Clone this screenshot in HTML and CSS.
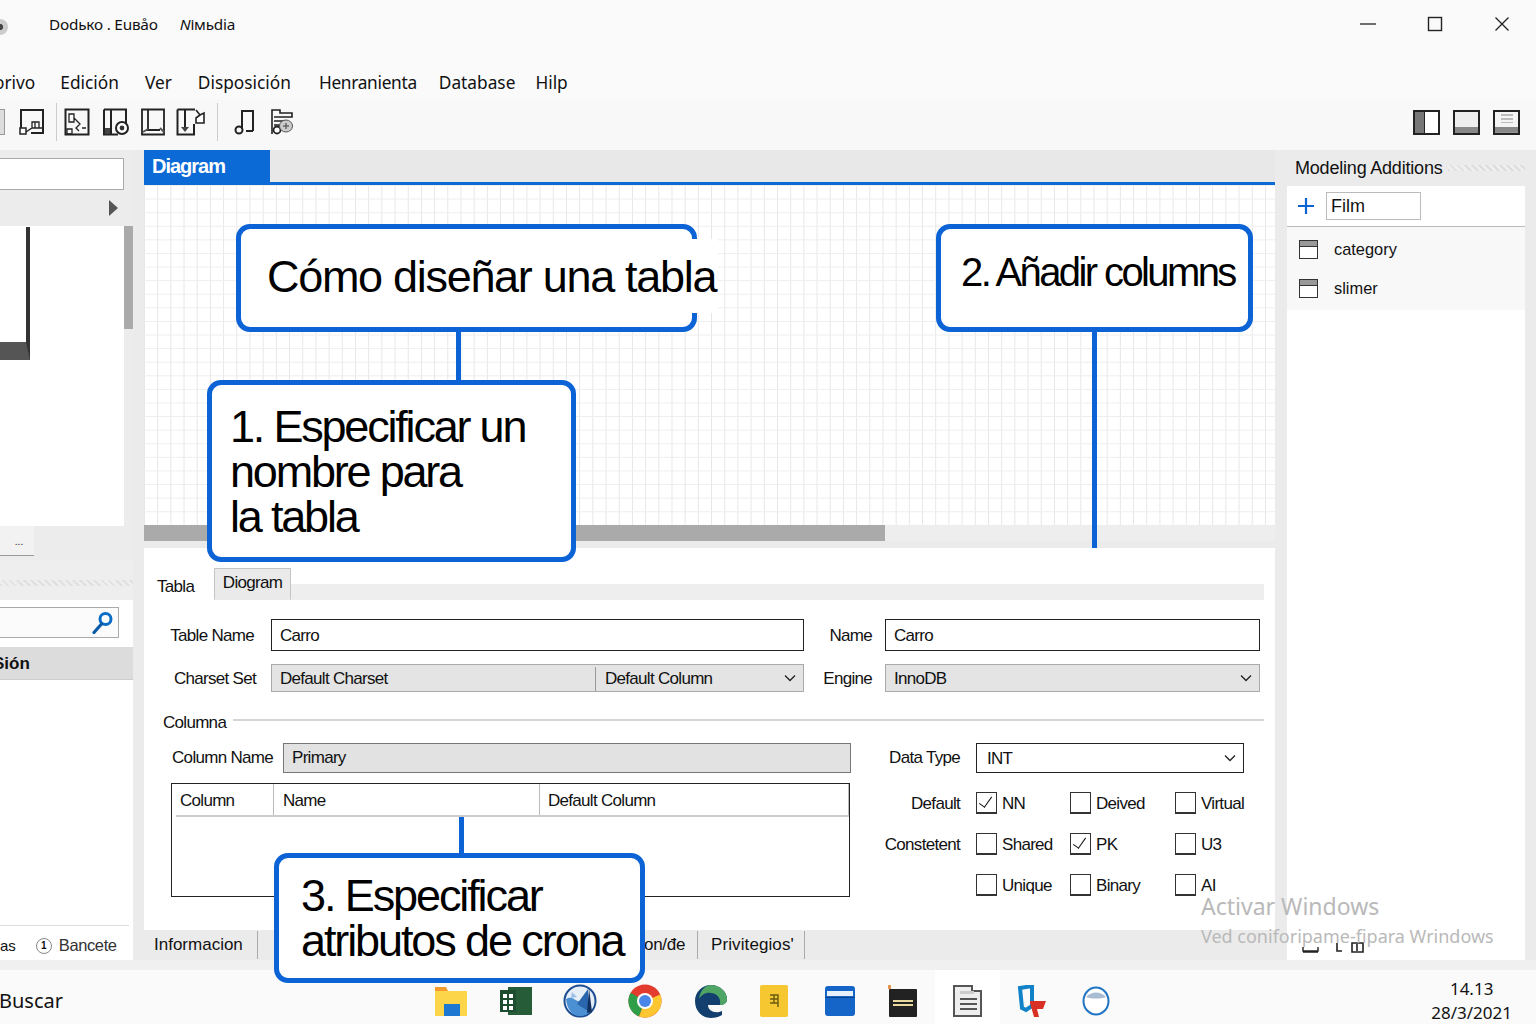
FILE: index.html
```html
<!DOCTYPE html>
<html lang="es">
<head>
    <meta charset="UTF-8">
    <title>Cómo diseñar una tabla</title>
    <link rel="stylesheet" href="styles.css">
</head>
<body>
<div class="app">
    <div class="titlebar">
        <span class="app-dot"></span>
        <span class="title-text">Dodько . Euвåo</span>
        <span class="title-text title-second"><i>N</i>імьdia</span>
        <div class="win-controls">
            <svg width="16" height="16" viewBox="0 0 16 16"><path d="M0 8h16" stroke="#222" stroke-width="1.3"/></svg>
            <svg width="16" height="16" viewBox="0 0 16 16"><rect x="1.5" y="1.5" width="13" height="13" fill="none" stroke="#222" stroke-width="1.4"/></svg>
            <svg width="16" height="16" viewBox="0 0 16 16"><path d="M1.5 1.5l13 13M14.5 1.5l-13 13" stroke="#222" stroke-width="1.3"/></svg>
        </div>
    </div>

    <div class="menubar">
        <span class="menu-first">orivo</span>
        <span class="m-edit">Edición</span>
        <span class="m-ver">Ver</span>
        <span class="m-disp">Disposición</span>
        <span class="m-herr">Henranienta</span>
        <span class="m-db">Database</span>
        <span class="m-help">Hilp</span>
    </div>

    <div class="toolbar">
        <div class="tool-group">
            <span class="tool-stub"></span>
            <svg class="tool tool-a" width="26" height="28" viewBox="0 0 26 28"><path d="M2 23V2h22v23H12" fill="none" stroke="#222" stroke-width="2"/><rect x="1" y="20" width="6" height="6" fill="#fff" stroke="#222" stroke-width="1.5"/><path d="M13 20v-6h7v6M16 14v6M7 24l6-4h11" fill="none" stroke="#222" stroke-width="1.3"/></svg>
            <span class="tool-sep tool-sep-a"></span>
            <svg class="tool tool-b" width="26" height="28" viewBox="0 0 26 28"><path d="M1.5 1.5h23v25h-23z" fill="none" stroke="#222" stroke-width="2"/><path d="M5 6h5v8H5zM10 10l6 6-4 4 3 3M3 21h5v5H3zM18 20h4" fill="none" stroke="#222" stroke-width="1.3"/></svg>
            <svg class="tool tool-c" width="28" height="28" viewBox="0 0 28 28"><path d="M2 1.5h22v20M2 1.5v25h14M9 2v24" fill="none" stroke="#222" stroke-width="2"/><rect x="3" y="20" width="5" height="6" fill="#444"/><circle cx="20" cy="20" r="6" fill="#fff" stroke="#222" stroke-width="2"/><circle cx="20" cy="20" r="2.4" fill="#333"/></svg>
            <svg class="tool tool-d" width="26" height="28" viewBox="0 0 26 28"><path d="M2 1.5h22v25H2zM8 2v20M6 22h14" fill="none" stroke="#222" stroke-width="1.8"/><path d="M3 24l5-3M20 20l4 4" stroke="#555" stroke-width="2"/></svg>
            <svg class="tool tool-e" width="30" height="28" viewBox="0 0 30 28"><path d="M1.5 1.5H19M1.5 1.5v25H18V16M9 2v18" fill="none" stroke="#222" stroke-width="2"/><path d="M5 19h8l-4 5z" fill="#444"/><path d="M20 2l4 5 4-2v10h-8v-5l4-3" fill="#fff" stroke="#222" stroke-width="1.6"/></svg>
        </div>
        <span class="tool-sep"></span>
        <div class="tool-group tool-group-b">
            <svg width="24" height="28" viewBox="0 0 24 28"><path d="M9 21V3h11v20" fill="none" stroke="#222" stroke-width="2"/><circle cx="6" cy="22" r="3.5" fill="none" stroke="#222" stroke-width="2"/><path d="M13 23h7" stroke="#222" stroke-width="2"/></svg>
            <svg width="24" height="28" viewBox="0 0 24 28"><path d="M2 26V2h8v3h12v4H4M4 13h12M4 17h6" fill="none" stroke="#222" stroke-width="1.6"/><circle cx="7" cy="22" r="3.5" fill="#fff" stroke="#222" stroke-width="1.8"/><ellipse cx="16" cy="18" rx="6.5" ry="6" fill="#ccc" stroke="#555"/><path d="M16 15v6M13 18h6" stroke="#666" stroke-width="1.5"/></svg>
        </div>
        <div class="layout-btns">
            <span class="lay lay-left"></span>
            <span class="lay lay-bottom"></span>
            <span class="lay lay-dots"></span>
        </div>
    </div>

    <div class="main">
        <aside class="left">
            <div class="left-input"></div>
            <div class="left-arrow"><span class="tri"></span></div>
            <div class="tree">
                <span class="tree-shape"></span>
                <span class="tree-scroll"></span>
            </div>
            <div class="left-tabs"><span class="left-tab">...</span></div>
            <div class="left-strip"></div>
            <div class="left-lower">
                <div class="search">
                    <svg width="22" height="24" viewBox="0 0 22 24"><circle cx="13.5" cy="8" r="5.5" fill="#fff" stroke="#0a6cc4" stroke-width="3"/><path d="M9.5 13L2 21.5" stroke="#0a5aa8" stroke-width="3.2" stroke-linecap="round"/></svg>
                </div>
                <div class="sesion"><span>Sión</span></div>
                <div class="left-foot">
                    <span class="foot-as">as</span>
                    <span class="foot-num">1</span>
                    <span class="foot-label">Bancete</span>
                </div>
            </div>
        </aside>

        <section class="center">
            <div class="tabstrip"><span class="tab-active">Diagram</span></div>
            <div class="canvas"></div>
            <div class="hscroll"><span class="hthumb"></span></div>

            <div class="form">
                <div class="form-tabs">
                    <span class="ftab-plain">Tabla</span>
                    <span class="ftab">Diogram</span>
                    <span class="ftab-rest"></span>
                </div>

                <div class="grid-row row-name">
                    <label>Table Name</label>
                    <div class="input">Carro</div>
                    <label>Name</label>
                    <div class="input">Carro</div>
                </div>
                <div class="grid-row row-charset">
                    <label>Charset Set</label>
                    <div class="select two-part">
                        <span class="part-a">Default Charset</span>
                        <span class="part-b">Default Column</span>
                        <svg class="chev" width="12" height="8" viewBox="0 0 12 8"><path d="M1 1.5l5 5 5-5" fill="none" stroke="#222" stroke-width="1.3"/></svg>
                    </div>
                    <label>Engine</label>
                    <div class="select">
                        <span>InnoDB</span>
                        <svg class="chev" width="12" height="8" viewBox="0 0 12 8"><path d="M1 1.5l5 5 5-5" fill="none" stroke="#222" stroke-width="1.3"/></svg>
                    </div>
                </div>

                <div class="group-title"><span>Columna</span><i></i></div>

                <div class="col-area">
                    <div class="col-left">
                        <div class="col-name">
                            <label>Column Name</label>
                            <div class="input input-grey">Primary</div>
                        </div>
                        <div class="col-table">
                            <div class="col-head">
                                <span class="ch1">Column</span>
                                <span class="ch2">Name</span>
                                <span class="ch3">Default Column</span>
                            </div>
                        </div>
                    </div>
                    <div class="col-right">
                        <div class="dtype">
                            <label>Data Type</label>
                            <div class="input dtype-box">
                                <span>INT</span>
                                <svg class="chev" width="12" height="8" viewBox="0 0 12 8"><path d="M1 1.5l5 5 5-5" fill="none" stroke="#222" stroke-width="1.3"/></svg>
                            </div>
                        </div>
                        <div class="checks">
                            <label>Default</label>
                            <span class="chk on">NN</span>
                            <span class="chk">Deived</span>
                            <span class="chk">Virtual</span>
                            <label>Constetent</label>
                            <span class="chk">Shared</span>
                            <span class="chk on">PK</span>
                            <span class="chk">U3</span>
                            <label></label>
                            <span class="chk">Unique</span>
                            <span class="chk">Binary</span>
                            <span class="chk">AI</span>
                        </div>
                    </div>
                </div>
            </div>

            <div class="bottom-tabs">
                <span class="bt bt-info">Informacion</span>
                <span class="bt bt-cons">on/đe</span>
                <span class="bt bt-priv">Privitegios'</span>
            </div>
        </section>

        <aside class="right">
            <div class="right-head"><span>Modeling Additions</span><i></i></div>
            <div class="right-body">
                <div class="add-row">
                    <svg width="16" height="16" viewBox="0 0 16 16"><path d="M8 0v16M0 8h16" stroke="#0b63d6" stroke-width="2.2"/></svg>
                    <div class="film">Film</div>
                </div>
                <div class="list">
                    <div class="list-row"><span class="tbl-icon"></span>category</div>
                    <div class="list-row"><span class="tbl-icon"></span>slimer</div>
                </div>
                <div class="right-foot">
                    <svg width="64" height="14" viewBox="0 0 64 14"><path d="M1 8v4h15V8M1 13h15" fill="none" stroke="#222" stroke-width="1.4"/><path d="M35 4v8h5M50 4h11v9H50zM55 5v7" fill="none" stroke="#222" stroke-width="1.6"/></svg>
                </div>
            </div>
        </aside>
    </div>

    <div class="taskbar">
        <span class="buscar">Buscar</span>
        <div class="task-icons">
            <span class="ti"><svg width="32" height="30" viewBox="0 0 32 30"><path d="M0 1h11l2 4H0z" fill="#f29a2e"/><path d="M0 5h32v25H0z" fill="#fcd548"/><rect x="9" y="18" width="16" height="12" fill="#1e78d2"/></svg></span>
            <span class="ti"><svg width="32" height="28" viewBox="0 0 32 28"><rect x="8" y="0" width="24" height="28" fill="#265c38"/><rect x="0" y="3" width="16" height="22" fill="#1d4d2e"/><path d="M3 7h4v4H3zM9 7h4v4H9zM3 13h4v4H3zM9 13h4v4H9zM3 19h4v4H3zM9 19h4v4H9z" fill="#fff"/></svg></span>
            <span class="ti"><svg width="34" height="34" viewBox="0 0 34 34"><circle cx="17" cy="17" r="15.5" fill="#e6eef8" stroke="#1d4f92" stroke-width="2"/><path d="M3 15c6-4 9 2 13 2 3 0 5-3 5-3l7 13a15 15 0 0 1-11 5C9 32 4 25 3 15z" fill="#4b90d2"/><path d="M25 5L14 20l11 7z" fill="#2a66ad"/><path d="M26 4l3 24-5 1z" fill="#12305f"/><path d="M9 8l5 5-6 1z" fill="#9cc0e6"/></svg></span>
            <span class="ti"><svg width="34" height="34" viewBox="0 0 34 34"><circle cx="17" cy="17" r="16.5" fill="#e33b2e"/><path d="M17 17L2.6 8.7A16.5 16.5 0 0 0 11 32.4z" fill="#2f9e48"/><path d="M17 17l15.2-6.4a16.5 16.5 0 0 1-21.2 21.8z" fill="#fbc62f"/><circle cx="17" cy="17" r="8" fill="#fff"/><circle cx="17" cy="17" r="6" fill="#4a86e8"/></svg></span>
            <span class="ti ti-shift"><svg width="34" height="34" viewBox="0 0 34 34"><path d="M1 17C1 8 8 1 17 1c9 0 16 7 16 14 0 4-3 6-8 6H14c0 5 5 8 11 7l3-1v4c-3 2-7 3-11 3C8 34 1 27 1 17z" fill="#123f6e"/><path d="M17 1c9 0 16 7 16 14 0 4-3 6-7 6 1-5-1-11-9-12-5-1-10 2-12 6 1-8 6-14 12-14z" fill="#4fa664"/></svg></span>
            <span class="ti"><svg width="28" height="32" viewBox="0 0 28 32"><rect width="28" height="32" rx="2" fill="#f6c731"/><path d="M10 10h8v12M10 14h8M10 18h8M14 10v8" fill="none" stroke="#6a5a10" stroke-width="1.4"/></svg></span>
            <span class="ti ti-shift"><svg width="30" height="30" viewBox="0 0 30 30"><rect width="30" height="30" rx="3" fill="#1565c8"/><rect x="2" y="5" width="26" height="5" fill="#e8f0fa"/><rect y="11" width="30" height="1" fill="#0c4390"/></svg></span>
            <span class="ti"><svg width="32" height="32" viewBox="0 0 32 32"><rect x="2" y="4" width="28" height="28" rx="1" fill="#222"/><rect x="1" y="0" width="3" height="4" fill="#e8954e"/><path d="M6 16h20M6 20h20" stroke="#e8d9a0" stroke-width="2"/></svg></span>
            <span class="ti ti-lit"><svg width="32" height="32" viewBox="0 0 32 32"><path d="M3 30V1h18v5h9v25H3z" fill="#eee" stroke="#555" stroke-width="2"/><path d="M9 6h14v3H9" fill="#ccc"/><path d="M9 14h17M9 19h17M9 24h17" stroke="#555" stroke-width="2"/></svg></span>
            <span class="ti"><svg width="30" height="32" viewBox="0 0 30 32"><path d="M3 3l12-2v20l-6 4-4-2z" fill="none" stroke="#1182c8" stroke-width="4"/><path d="M13 16h16l-3 8h-6l2 8h-5l-4-14z" fill="#d93025"/></svg></span>
            <span class="ti"><svg width="28" height="30" viewBox="0 0 28 30"><ellipse cx="14" cy="15" rx="12.5" ry="13.5" fill="#fff" stroke="#1f74c4" stroke-width="2"/><path d="M4 11c5-6 15-6 20 0-6 2-14 2-20 0z" fill="#a9bdd2"/></svg></span>
        </div>
        <div class="clock"><span>14.13</span><span>28/3/2021</span></div>
    </div>

    <!-- callouts over the screen -->
    <span class="link link-1"></span>
    <span class="link link-2"></span>
    <span class="link link-3"></span>
    <div class="callout c-title"><span class="c-gap"></span><span class="c-text">Cómo diseñar una tabla</span></div>
    <div class="callout c-add">2. Añadir columns</div>
    <div class="callout c-name">1. Especificar un<br>nombre para<br>la tabla</div>
    <div class="callout c-attr">3. Especificar<br>atributos de crona</div>

    <div class="activate">
        <div class="act-a">Activar Windows</div>
        <div class="act-b">Ved coniforipame-fipara Wrindows</div>
    </div>
</div>
</body>
</html>
```

FILE: styles.css
```css
* {
    box-sizing: border-box;
}
body {
    margin: 0;
    font-family: "Liberation Sans", Arial, sans-serif;
    color: #111;
    background: #fafafa;
}
.app {
    position: relative;
    width: 1536px;
    height: 1024px;
    overflow: hidden;
    display: flex;
    flex-direction: column;
}

/* title + menu */
.titlebar {
    height: 50px;
    flex-shrink: 0;
    display: flex;
    align-items: center;
    font-family: "Noto Sans", sans-serif;
    font-size: 15.3px;
    letter-spacing: -0.2px;
    padding-bottom: 2px;
}
.app-dot {
    width: 16px;
    height: 16px;
    margin-left: -8px;
    margin-top: 5px;
    border-radius: 50%;
    background: radial-gradient(circle, #444 25%, #ccc 30%);
}
.title-text {
    margin-left: 41px;
}
.title-second {
    margin-left: 22px;
}
.win-controls {
    margin-left: auto;
    margin-right: 26px;
    display: flex;
    gap: 51px;
}
.menubar {
    margin-top: 20px;
    height: 25px;
    flex-shrink: 0;
    display: flex;
    align-items: center;
    font-family: "Noto Sans", sans-serif;
    font-size: 17.3px;
    white-space: nowrap;
}
.menu-first { margin-left: -6px; }
.m-edit { margin-left: 25px; }
.m-ver { margin-left: 26px; }
.m-disp { margin-left: 26px; }
.m-herr {
    margin-left: 28px;
    letter-spacing: -0.3px;
}
.m-db { margin-left: 22px; }
.m-help { margin-left: 20px; }

.toolbar {
    margin-top: 5px;
    height: 50px;
    flex-shrink: 0;
    display: flex;
    align-items: center;
    background: #f8f8f9;
    padding-bottom: 6px;
}
.tool-group {
    display: flex;
    align-items: center;
}
.tool-stub {
    width: 5px;
    height: 26px;
    border: 1.5px solid #999;
    border-left: 0;
    background: #ddd;
}
.tool-a { margin-left: 14px; }
.tool-sep-a {
    margin-left: 7px;
    margin-right: 7px;
    height: 30px;
}
.tool-c { margin-left: 12px; }
.tool-d { margin-left: 10px; }
.tool-e { margin-left: 10px; }
.tool-sep {
    width: 1px;
    height: 38px;
    background: #ccc;
    margin-left: 11px;
}
.tool-group-b {
    margin-left: 15px;
    gap: 13px;
}
.layout-btns {
    margin-left: auto;
    margin-right: 16px;
    display: flex;
    gap: 13px;
}
.lay {
    width: 27px;
    height: 25px;
    border: 2px solid #222;
    background: #f4f4f4;
}
.lay-left {
    background: linear-gradient(90deg, #777 38%, #222 38%, #222 44%, #fff 44%);
}
.lay-bottom {
    background: linear-gradient(#eee 70%, #888 70%);
}
.lay-dots {
    background:
        linear-gradient(#888, #888) bottom / 100% 28% no-repeat,
        repeating-linear-gradient(#bbb 0 2px, transparent 2px 4px) center 2px / 12px 9px no-repeat,
        #f4f4f4;
}

/* main panes */
.main {
    height: 810px;
    flex-shrink: 0;
    background: #ebebeb;
    display: grid;
    grid-template-columns: 133px 1131px 239px;
    column-gap: 11px;
}
.left {
    display: flex;
    flex-direction: column;
    background: #ececec;
}
.left-input {
    margin-top: 8px;
    height: 32px;
    width: 124px;
    background: #fff;
    border: 1px solid #aaa;
    border-left: 0;
}
.left-arrow {
    height: 36px;
    display: flex;
    align-items: center;
    justify-content: flex-end;
    padding-right: 15px;
}
.tri {
    width: 0;
    height: 0;
    border-left: 9px solid #555;
    border-top: 8px solid transparent;
    border-bottom: 8px solid transparent;
}
.tree {
    height: 300px;
    background: #fff;
    position: relative;
    margin-right: 9px;
}
.tree-shape {
    position: absolute;
    left: -10px;
    top: 1px;
    width: 40px;
    height: 133px;
    border-right: 4px solid #333;
    border-bottom: 18px solid #555;
}
.tree-scroll {
    position: absolute;
    right: -9px;
    top: 0;
    width: 9px;
    height: 103px;
    background: #aaa;
}
.left-tabs {
    height: 32px;
}
.left-tab {
    display: block;
    width: 34px;
    height: 30px;
    background: #f2f2f2;
    border-bottom: 1px solid #999;
    font-size: 10px;
    text-align: center;
    padding-top: 10px;
    padding-left: 4px;
}
.left-strip {
    margin-top: 2px;
    height: 40px;
    background: repeating-linear-gradient(45deg, #e0e0e0 0 2px, #eee 2px 5px) 0 20px / 100% 6px no-repeat #eee;
}
.left-lower {
    flex: 1;
    background: #fff;
    display: flex;
    flex-direction: column;
    padding-top: 7px;
}
.search {
    width: 119px;
    height: 31px;
    border: 1px solid #aaa;
    border-left: 0;
    background: #fbfbfb;
    display: flex;
    justify-content: flex-end;
    align-items: center;
    padding-right: 4px;
}
.sesion {
    margin-top: 9px;
    height: 33px;
    background: #dcdcdc;
    border-bottom: 1px solid #ccc;
    display: flex;
    align-items: center;
    font-weight: bold;
    font-size: 17px;
    padding-top: 1px;
}
.sesion span {
    margin-left: -7px;
}
.left-foot {
    margin-top: auto;
    height: 35px;
    display: flex;
    align-items: center;
    font-size: 15px;
    border-top: 1px solid #ddd;
    margin-right: 4px;
    padding-top: 5px;
}
.foot-num {
    margin-left: 20px;
    width: 16px;
    height: 16px;
    border: 1px solid #888;
    border-radius: 50%;
    font-size: 10px;
    font-weight: bold;
    text-align: center;
    line-height: 14px;
}
.foot-label {
    margin-left: 7px;
    font-size: 16.5px;
    letter-spacing: -0.4px;
    color: #333;
}

/* center pane */
.center {
    display: flex;
    flex-direction: column;
}
.tabstrip {
    height: 35px;
    background: #e8e8e8;
    border-bottom: 3px solid #0b6ad6;
}
.tab-active {
    display: block;
    width: 126px;
    height: 32px;
    background: #0b6ad6;
    color: #fff;
    font-weight: bold;
    font-size: 20px;
    letter-spacing: -1px;
    line-height: 32px;
    padding-left: 8px;
}
.canvas {
    height: 340px;
    background-color: #fff;
    background-image:
        linear-gradient(#eeeeee 1px, transparent 1px),
        linear-gradient(90deg, #e6e6e6 1px, transparent 1px);
    background-size: 13.2px 13.6px;
}
.hscroll {
    height: 16px;
    background: #eee;
}
.hthumb {
    display: block;
    width: 741px;
    height: 16px;
    background: #aaa;
}
.form {
    margin-top: 7px;
    height: 382px;
    background: #fff;
    font-size: 17px;
    letter-spacing: -0.7px;
    padding-top: 20px;
}
.form label {
    text-align: right;
    white-space: nowrap;
}
.form-tabs {
    height: 32px;
    display: flex;
    align-items: flex-end;
    margin-right: 11px;
}
.ftab-plain {
    margin-left: 13px;
    width: 57px;
    height: 23px;
}
.ftab {
    width: 77px;
    height: 32px;
    background: #eaeaea;
    border: 1px solid #c4c4c4;
    border-bottom-color: #eaeaea;
    text-align: center;
    padding-top: 4px;
}
.ftab-rest {
    flex: 1;
    height: 16px;
    background: #eee;
}
.grid-row {
    display: grid;
    grid-template-columns: 110px 550px 68px 388px;
    align-items: center;
}
.grid-row .input,
.grid-row .select {
    margin-left: 17px;
    padding-top: 2px;
}
.grid-row .input:last-child,
.grid-row .select:last-child {
    margin-left: 13px;
}
.row-name {
    margin-top: 19px;
    height: 32px;
}
.row-charset {
    margin-top: 13px;
    height: 28px;
}
.row-name label,
.row-charset label {
    padding-top: 2px;
}
.row-charset label:first-child {
    margin-right: -2px;
}
.input {
    height: 100%;
    border: 1px solid #222;
    background: #fff;
    padding-left: 8px;
    display: flex;
    align-items: center;
}
.select {
    height: 100%;
    border: 1px solid #aaa;
    background: #e4e4e4;
    padding-left: 8px;
    display: flex;
    align-items: center;
    position: relative;
}
.two-part .part-a {
    width: 316px;
    height: 100%;
    display: flex;
    align-items: center;
    border-right: 1px solid #999;
}
.two-part .part-b {
    margin-left: 9px;
}
.chev {
    position: absolute;
    right: 7px;
    top: 50%;
    margin-top: -4px;
}
.group-title {
    margin-top: 20px;
    margin-left: 19px;
    margin-right: 11px;
    height: 20px;
    display: flex;
    align-items: center;
    gap: 7px;
    padding-top: 1px;
}
.group-title i {
    flex: 1;
    height: 2px;
    margin-top: -5px;
    background: #d4d4d4;
}
.col-area {
    display: flex;
    margin-top: 11px;
}
.col-left {
    width: 707px;
    padding-left: 27px;
}
.col-name {
    display: flex;
    height: 30px;
    align-items: center;
}
.col-name label {
    width: 102px;
}
.input-grey {
    margin-left: 10px;
    width: 568px;
    background: #e2e2e2;
    border-color: #777;
}
.col-table {
    margin-top: 10px;
    width: 679px;
    height: 114px;
    border: 1px solid #222;
    padding-left: 4px;
}
.col-head {
    height: 33px;
    display: flex;
    border-bottom: 2px solid #ccc;
}
.col-head span {
    display: flex;
    align-items: center;
    padding-left: 4px;
    padding-top: 2px;
    border-right: 1px solid #bbb;
}
.col-head .ch1 { width: 98px; }
.col-head .ch2 {
    width: 266px;
    padding-left: 9px;
}
.col-head .ch3 {
    flex: 1;
    padding-left: 8px;
}
.col-right {
    width: 400px;
}
.dtype {
    display: flex;
    height: 30px;
    align-items: center;
}
.dtype label {
    width: 109px;
}
.dtype-box {
    margin-left: 16px;
    width: 268px;
    padding-left: 10px;
    padding-top: 2px;
    position: relative;
}
.checks {
    margin-top: 20px;
    display: grid;
    grid-template-columns: 125px 94px 105px auto;
    row-gap: 19px;
    grid-auto-rows: 22px;
    align-items: center;
}
.checks label {
    padding-right: 16px;
}
.chk {
    position: relative;
    padding-left: 26px;
    white-space: nowrap;
}
.chk::before {
    content: "";
    position: absolute;
    left: 0;
    top: -2px;
    width: 19px;
    height: 19px;
    border: 1px solid #333;
    border-bottom-width: 2px;
    background: #fff;
}
.chk.on::after {
    content: "";
    position: absolute;
    left: 6px;
    top: 0;
    width: 6px;
    height: 12px;
    border-right: 1.5px solid #111;
    border-bottom: 1.5px solid #111;
    transform: rotate(35deg);
}
.bottom-tabs {
    height: 30px;
    background: #ebebeb;
    display: flex;
    font-size: 17px;
    align-items: center;
}
.bt {
    height: 28px;
    display: flex;
    align-items: center;
    border-right: 1px solid #aaa;
}
.bt-info {
    margin-left: 10px;
    width: 104px;
}
.bt-cons {
    margin-left: 386px;
    width: 54px;
    letter-spacing: -0.3px;
}
.bt-priv {
    padding-left: 13px;
    width: 107px;
    letter-spacing: 0.1px;
}

/* right pane */
.right {
    display: flex;
    flex-direction: column;
    margin-left: 1px;
}
.right-head {
    height: 36px;
    display: flex;
    align-items: center;
    font-size: 18px;
    letter-spacing: -0.2px;
    padding-left: 8px;
    gap: 5px;
}
.right-head i {
    flex: 1;
    height: 6px;
    background: repeating-linear-gradient(45deg, #ddd 0 2px, #eee 2px 5px);
}
.right-body {
    flex: 1;
    background: #fff;
    display: flex;
    flex-direction: column;
}
.add-row {
    height: 41px;
    display: flex;
    align-items: center;
    padding-left: 11px;
    border-bottom: 1px solid #bbb;
}
.film {
    margin-left: 12px;
    width: 95px;
    height: 28px;
    border: 1px solid #bbb;
    font-size: 18px;
    padding-left: 4px;
    line-height: 27px;
}
.list {
    height: 83px;
    background: #f8f8f8;
}
.list-row {
    height: 39px;
    display: flex;
    align-items: center;
    padding-left: 12px;
    font-size: 16.4px;
}
.list-row:first-child {
    margin-top: 3px;
}
.tbl-icon {
    width: 19px;
    height: 19px;
    border: 1.5px solid #333;
    background: linear-gradient(#999 30%, #333 30%, #333 36%, #fff 36%);
    margin-right: 16px;
}
.right-foot {
    margin-top: auto;
    height: 32px;
    padding-left: 15px;
    padding-top: 11px;
}

/* taskbar */
.taskbar {
    flex: 1;
    min-height: 0;
    display: flex;
    align-items: center;
    background: #fafafa;
    border-top: 10px solid #f0f0f0;
}
.buscar {
    font-family: "Noto Sans", sans-serif;
    font-size: 20px;
    width: 419px;
    margin-top: 6px;
    margin-left: -1px;
    margin-right: 1px;
}
.task-icons {
    display: flex;
    height: 100%;
}
.ti {
    width: 64.5px;
    padding-top: 8px;
    display: flex;
    align-items: center;
    justify-content: center;
}
.ti-shift svg {
    margin-left: 4px;
}
.ti-lit {
    background: #fff;
}
.clock {
    margin-left: auto;
    margin-right: 24px;
    margin-top: 8px;
    display: flex;
    flex-direction: column;
    align-items: center;
    font-family: "Noto Sans", sans-serif;
    font-size: 17px;
    line-height: 24px;
}

/* callouts */
.callout {
    position: absolute;
    background: #fff;
    border: 5px solid #0b63d6;
    border-radius: 14px;
    color: #000;
    white-space: nowrap;
}
.c-title {
    left: 236px;
    top: 224px;
    width: 461px;
    height: 108px;
    font-size: 45px;
    letter-spacing: -1.3px;
}
.c-gap {
    position: absolute;
    right: -26px;
    top: 10px;
    bottom: 14px;
    width: 40px;
    background: #fff;
}
.c-text {
    position: absolute;
    left: 26px;
    top: 22px;
    line-height: 52px;
}
.c-add {
    left: 936px;
    top: 224px;
    width: 317px;
    height: 108px;
    font-size: 40px;
    line-height: 86px;
    padding-left: 20px;
    letter-spacing: -2.6px;
}
.c-name {
    left: 207px;
    top: 380px;
    width: 369px;
    height: 182px;
    font-size: 45px;
    line-height: 45px;
    padding: 19px 0 0 18px;
    letter-spacing: -2.2px;
}
.c-attr {
    left: 274px;
    top: 853px;
    width: 371px;
    height: 130px;
    font-size: 45px;
    line-height: 45px;
    padding: 15px 0 0 22px;
    letter-spacing: -2.1px;
}
.link {
    position: absolute;
    background: #0b63d6;
    width: 5px;
}
.link-1 {
    left: 456px;
    top: 330px;
    height: 52px;
}
.link-2 {
    left: 1092px;
    top: 330px;
    height: 218px;
}
.link-3 {
    left: 459px;
    top: 817px;
    height: 38px;
}

.activate {
    position: absolute;
    left: 1201px;
    top: 891px;
    color: #b9b9b9;
    font-family: "Noto Sans", sans-serif;
    white-space: nowrap;
}
.act-a {
    font-size: 23px;
    line-height: 30px;
}
.act-b {
    font-size: 18px;
    line-height: 30px;
}
```
